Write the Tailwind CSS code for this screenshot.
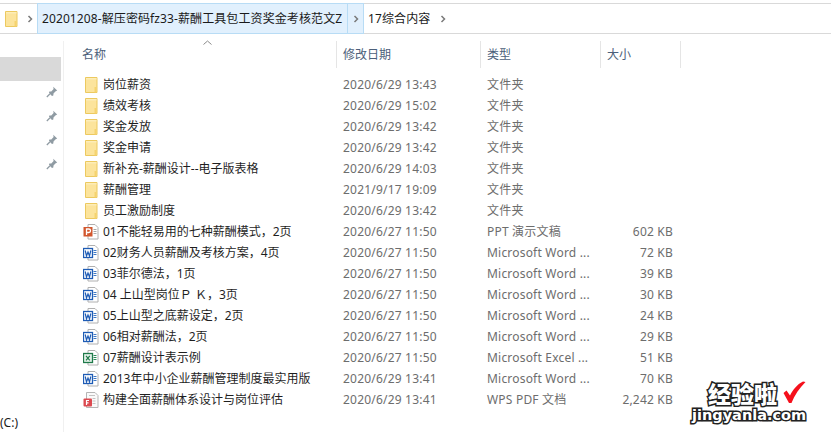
<!DOCTYPE html>
<html lang="zh-CN">
<head>
    <meta charset="UTF-8">
    <title>17综合内容</title>
    <script src="https://cdn.jsdelivr.net/npm/@tailwindcss/browser@4"></script>
</head>
<body class="relative w-[831px] h-[432px] overflow-hidden bg-white font-['Noto_Sans','Noto_Sans_CJK_SC',sans-serif] text-[12px]">

    <!-- icon symbols -->
    <svg class="hidden">
        <symbol id="folder" viewBox="0 0 16 16">
            <path d="M2.500 0.500h11.500v15h-11.500z" fill="#fce49c" stroke="#ecc95f"/>
            <path d="M3 1h10.500v1.500h-10.500z" fill="#fdedb8"/>
            <rect x="11.500" y="10" width="2" height="5.500" fill="#f5d36f"/>
        </symbol>
        <symbol id="word" viewBox="0 0 16 16">
            <path d="M5 0.500h7l3 3v11.500h-10z" fill="#fff" stroke="#b0b0b0"/>
            <path d="M10.500 5.500h3M10.500 7.500h3M10.500 9.500h3" stroke="#3f78c4"/>
            <rect x="0.500" y="3.500" width="9" height="9" fill="#fff" stroke="#1f5cb5" stroke-width="1.300"/>
            <path d="M2.200 5.500l1.300 5.500 1.500-4 1.500 4 1.300-5.500" fill="none" stroke="#1f5cb5" stroke-width="1.200"/>
        </symbol>
        <symbol id="ppt" viewBox="0 0 16 16">
            <path d="M5 0.500h7l3 3v11.500h-10z" fill="#fff" stroke="#b0b0b0"/>
            <path d="M10.500 5.500h3M10.500 7.500h3M10.500 9.500h3" stroke="#a8a8a8"/>
            <rect x="0.500" y="3" width="9" height="9.500" fill="#d2572e"/>
            <path d="M3.500 11v-6h2.300a1.500 1.500 0 0 1 0 3.500h-2.300" fill="none" stroke="#fff" stroke-width="1.300"/>
        </symbol>
        <symbol id="excel" viewBox="0 0 16 16">
            <path d="M5 0.500h7l3 3v11.500h-10z" fill="#fff" stroke="#b0b0b0"/>
            <path d="M10.500 5.500h3M10.500 7.500h3M10.500 9.500h3" stroke="#2f8a5a"/>
            <rect x="0.500" y="3.500" width="9" height="9" fill="#e6f2ea" stroke="#1f7a4a" stroke-width="1.300"/>
            <path d="M3 5.800l3.800 4.600M6.800 5.800l-3.800 4.600" stroke="#1f7a4a" stroke-width="1.200"/>
        </symbol>
        <symbol id="pdf" viewBox="0 0 16 16">
            <path d="M3.500 0.500h8.500l3 3v12h-11.500z" fill="#fafafa" stroke="#b5b5b5"/>
            <path d="M6 3.500h6M9.500 6.500h3M9.500 9h3M9.500 11.500h3" stroke="#c4c4c4"/>
            <rect x="0.500" y="6.500" width="8.500" height="8" rx="1" fill="#dc4a50"/>
            <path d="M3.500 13v-4.500h2.500M3.500 10.800h2" fill="none" stroke="#fff" stroke-width="1.200"/>
        </symbol>
        <symbol id="pin" viewBox="0 0 12 12">
            <path d="M7.200 0.800l4 3.800-1.500.6-2.200 2.400-.2 2-1.300.3-3-3 .3-1.300 2-.2 2.300-2.300z" fill="#8f9ba3"/>
            <path d="M3.800 8l-3 3" stroke="#8f9ba3" stroke-width="1.200"/>
        </symbol>
        <symbol id="chev" viewBox="0 0 6 8">
            <path d="M1.500 1l3 3-3 3" fill="none" stroke="#7a7a7a" stroke-width="1.500"/>
        </symbol>
    </svg>

    <!-- address bar -->
    <div class="mt-[3px] h-[31px] flex items-center border-y border-[#d9d9d9] text-[#1a1a1a] text-[12px] tracking-[0.1px]">
        <svg class="ml-[3px] w-[16px] h-[16px]"><use href="#folder"/></svg>
        <svg class="ml-[8px] w-[6px] h-[8px]"><use href="#chev"/></svg>
        <div class="ml-[5px] h-full flex bg-[#e1f0fd] outline outline-[#b8dcf5]">
            <span class="w-[309px] pl-[4px] leading-[29px] whitespace-nowrap">20201208-解压密码fz33-薪酬工具包工资奖金考核范文Z</span>
            <span class="w-[16px] flex items-center justify-center border-l border-[#b8dcf5]"><svg class="w-[6px] h-[8px]"><use href="#chev"/></svg></span>
        </div>
        <span class="ml-[5px] whitespace-nowrap">17综合内容</span>
        <svg class="ml-[10px] w-[6px] h-[8px]"><use href="#chev"/></svg>
    </div>

    <div class="flex h-[398px]">
        <!-- navigation pane -->
        <div class="relative w-[64px] shrink-0 border-r border-[#f0f0f0] mt-[7px]">
            <div class="mt-[16px] w-[61px] h-[24px] bg-[#d9d9d9]"></div>
            <div class="mt-[5px] flex flex-col items-end gap-[12px] pr-[5px]">
                <svg class="w-[12px] h-[12px]"><use href="#pin"/></svg>
                <svg class="w-[12px] h-[12px]"><use href="#pin"/></svg>
                <svg class="w-[12px] h-[12px]"><use href="#pin"/></svg>
                <svg class="w-[12px] h-[12px]"><use href="#pin"/></svg>
            </div>
            <span class="absolute left-0 top-[373px] text-[#1a1a1a] text-[12px]">(C:)</span>
        </div>

        <!-- file list -->
        <div class="flex-1">
            <div class="relative mt-[7px] h-[27px] grid grid-cols-[273px_144px_120px_80px] text-[#4c607a]">
                <div class="pl-[18px] leading-[27px] border-r border-[#e5e5e5]">名称</div>
                <div class="pl-[6px] leading-[27px] border-r border-[#e5e5e5]">修改日期</div>
                <div class="pl-[6px] leading-[27px] border-r border-[#e5e5e5]">类型</div>
                <div class="pl-[6px] leading-[27px] border-r border-[#e5e5e5]">大小</div>
                <svg class="absolute left-[139px] -top-[1px] w-[9px] h-[5px]" viewBox="0 0 9 5"><path d="M0.500 4.500l4-3.500 4 3.500" fill="none" stroke="#8a8a8a"/></svg>
            </div>
            <div id="rows" class="mt-[6px]"></div>
        </div>
    </div>

    <!-- watermark -->
    <div class="absolute left-[692px] top-[381px] w-[139px] pointer-events-none">
        <div class="flex items-center h-[25px]">
            <span class="ml-[16px] font-['Noto_Sans_CJK_SC',sans-serif] font-black text-[23px] leading-[25px] text-white [-webkit-text-stroke:3px_#222] [paint-order:stroke_fill]">经验啦</span>
            <svg class="ml-[6px] -mt-[3px] w-[23px] h-[23px]" viewBox="0 0 23 23"><path d="M0.500 12l3-2.500 3.500 5c3-6 7-11 13-14l2.500.5c-6 6-11 13-14 21h-2.500z" fill="#f5101c"/></svg>
        </div>
        <div class="ml-[0px] font-['DejaVu_Sans',sans-serif] font-bold text-[14.500px] leading-[19px] text-white [-webkit-text-stroke:3px_#222] [paint-order:stroke_fill] whitespace-nowrap">jingyanla.com</div>
    </div>

    <script>
        // name, date, type, size, icon
        const files = [
            ['岗位薪资', '2020/6/29 13:43', '文件夹', '', 'folder'],
            ['绩效考核', '2020/6/29 15:02', '文件夹', '', 'folder'],
            ['奖金发放', '2020/6/29 13:42', '文件夹', '', 'folder'],
            ['奖金申请', '2020/6/29 13:42', '文件夹', '', 'folder'],
            ['新补充-薪酬设计--电子版表格', '2020/6/29 14:03', '文件夹', '', 'folder'],
            ['薪酬管理', '2021/9/17 19:09', '文件夹', '', 'folder'],
            ['员工激励制度', '2020/6/29 13:42', '文件夹', '', 'folder'],
            ['01不能轻易用的七种薪酬模式，2页', '2020/6/27 11:50', 'PPT 演示文稿', '602 KB', 'ppt'],
            ['02财务人员薪酬及考核方案，4页', '2020/6/27 11:50', 'Microsoft Word ...', '72 KB', 'word'],
            ['03菲尔德法，1页', '2020/6/27 11:50', 'Microsoft Word ...', '39 KB', 'word'],
            ['04 上山型岗位Ｐ Ｋ，3页', '2020/6/27 11:50', 'Microsoft Word ...', '30 KB', 'word'],
            ['05上山型之底薪设定，2页', '2020/6/27 11:50', 'Microsoft Word ...', '24 KB', 'word'],
            ['06相对薪酬法，2页', '2020/6/27 11:50', 'Microsoft Word ...', '29 KB', 'word'],
            ['07薪酬设计表示例', '2020/6/27 11:50', 'Microsoft Excel ...', '51 KB', 'excel'],
            ['2013年中小企业薪酬管理制度最实用版', '2020/6/29 13:41', 'Microsoft Word ...', '70 KB', 'word'],
            ['构建全面薪酬体系设计与岗位评估', '2020/6/29 13:41', 'WPS PDF 文档', '2,242 KB', 'pdf'],
        ];

        document.getElementById('rows').innerHTML = files.map(([name, date, type, size, icon]) => `
            <div class="h-[21px] grid grid-cols-[273px_144px_120px_72px] items-center text-[#6d6d6d] whitespace-nowrap tracking-[0.2px]">
                <div class="pl-[19px] flex items-center text-[#1f1f1f] tracking-normal">
                    <svg class="w-[16px] h-[16px] shrink-0"><use href="#${icon}"/></svg>
                    <span class="ml-[4px]">${name}</span>
                </div>
                <div class="pl-[6px]">${date}</div>
                <div class="pl-[6px]">${type}</div>
                <div class="text-right">${size}</div>
            </div>`).join('');
    </script>
</body>
</html>
